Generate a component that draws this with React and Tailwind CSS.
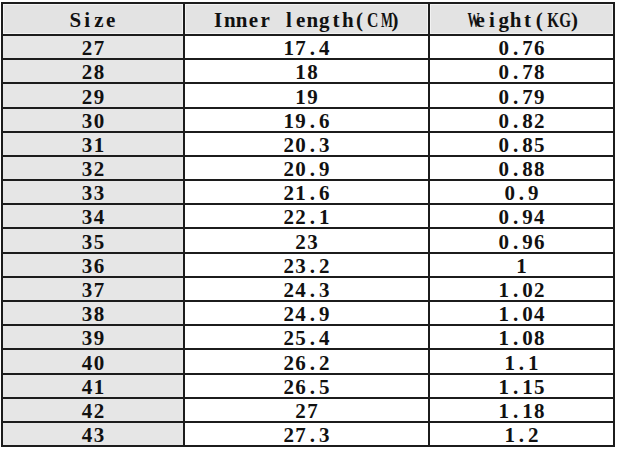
import React from "react";

const rows = [
  ["27", "17.4", "0.76", "h-[24px]"],
  ["28", "18", "0.78", "h-[24px]"],
  ["29", "19", "0.79", "h-[25px]"],
  ["30", "19.6", "0.82", "h-[24px]"],
  ["31", "20.3", "0.85", "h-[24px]"],
  ["32", "20.9", "0.88", "h-[24px]"],
  ["33", "21.6", "0.9", "h-[24px]"],
  ["34", "22.1", "0.94", "h-[24px]"],
  ["35", "23", "0.96", "h-[25px]"],
  ["36", "23.2", "1", "h-[24px]"],
  ["37", "24.3", "1.02", "h-[24px]"],
  ["38", "24.9", "1.04", "h-[24px]"],
  ["39", "25.4", "1.08", "h-[24px]"],
  ["40", "26.2", "1.1", "h-[25px]"],
  ["41", "26.5", "1.15", "h-[24px]"],
  ["42", "27", "1.18", "h-[24px]"],
  ["43", "27.3", "1.2", "h-[24px]"],
];

const font = {
  fontFamily: '"Liberation Serif", "DejaVu Serif", serif',
};

const SCALE = {
  M: "scale-x-[0.6]",
  W: "scale-x-[0.58]",
  K: "scale-x-[0.72]",
  G: "scale-x-[0.72]",
  C: "scale-x-[0.75]",
};

function Mono({ text }) {
  return (
    <span className="inline-flex relative top-[1px]">
      {text.split("").map((c, i) => (
        <span key={i} className="inline-block w-[11.8px] text-center">
          {SCALE[c] ? (
            <span className={"inline-block " + SCALE[c]}>{c}</span>
          ) : (
            c
          )}
        </span>
      ))}
    </span>
  );
}

const cell = "flex items-center justify-center border-r-2 border-[#1c1c1c]";

export default function App() {
  return (
    <div className="w-[621px] h-[451px] bg-white pt-[2px] pl-px overflow-hidden">
      <div
        className="w-[614px] border-l-2 border-t-2 border-[#1c1c1c] text-[#111] font-bold text-[21px] leading-[18px]"
        style={font}
      >
        <div className="grid grid-cols-[182px_245px_185px] h-[32px] bg-[#e3e3e3] border-b-2 border-[#1c1c1c]">
          <div className={cell + " shadow-[inset_0_0_0_1px_#f2f2f2]"}>
            <Mono text="Size" />
          </div>
          <div className={cell + " shadow-[inset_0_0_0_1px_#f2f2f2]"}>
            <Mono text="Inner length(CM)" />
          </div>
          <div className={cell + " shadow-[inset_0_0_0_1px_#f2f2f2]"}>
            <Mono text="Weight(KG)" />
          </div>
        </div>
        {rows.map((r) => (
          <div
            key={r[0]}
            className={"grid grid-cols-[182px_245px_185px] border-b-2 border-[#1c1c1c] " + r[3]}
          >
            <div className={cell + " bg-[#e6e6e6]"}>
              <Mono text={r[0]} />
            </div>
            <div className={cell + " bg-white"}>
              <Mono text={r[1]} />
            </div>
            <div className={cell + " bg-white"}>
              <Mono text={r[2]} />
            </div>
          </div>
        ))}
      </div>
    </div>
  );
}
